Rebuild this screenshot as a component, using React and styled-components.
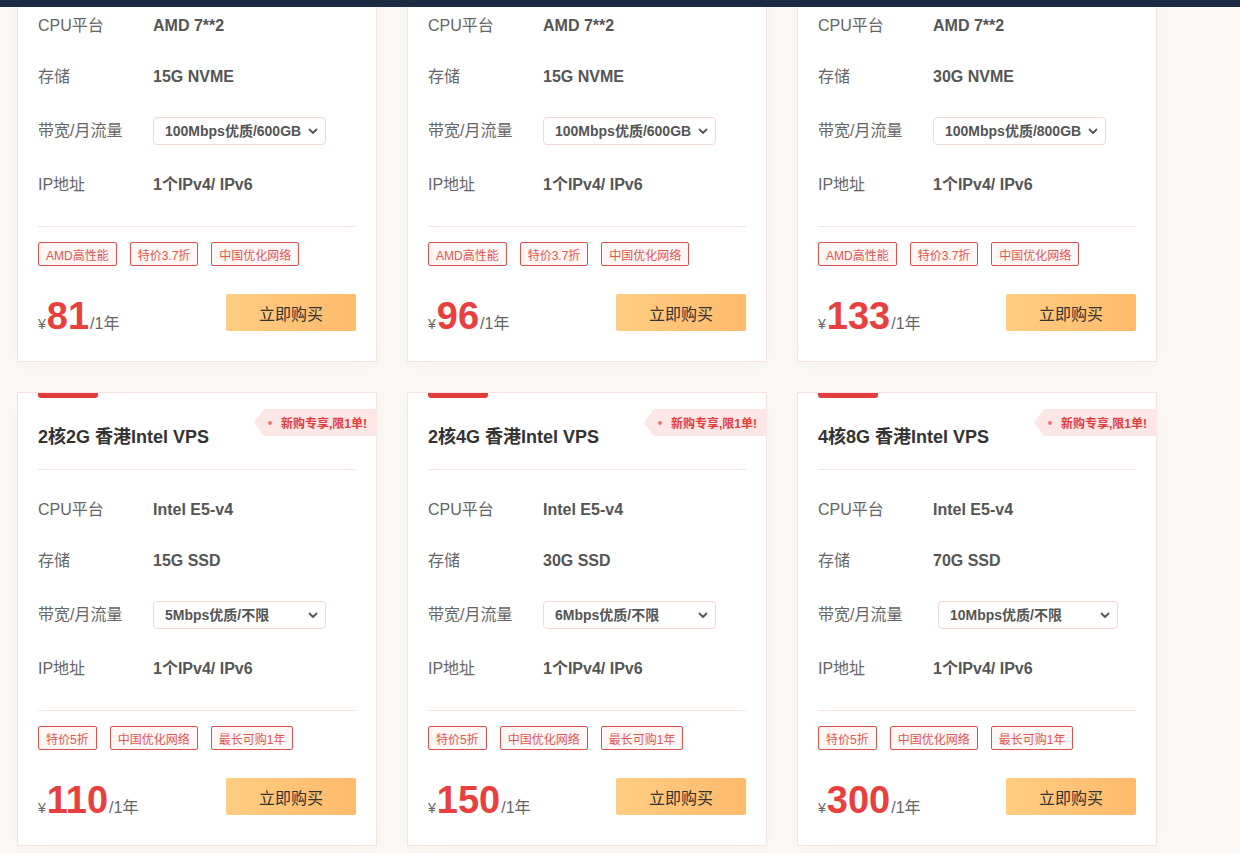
import React from "react";
import styled, { createGlobalStyle } from "styled-components";

const Global = createGlobalStyle`
  html, body { margin: 0; padding: 0; background: #fbf9f6; }
  body { font-family: "Liberation Sans", "Noto Sans CJK SC", sans-serif; overflow: hidden; }
  * { box-sizing: border-box; }
`;

const Page = styled.div`
  width: 1240px;
  height: 853px;
  overflow: hidden;
  display: flex;
  flex-direction: column;
  background: #fbf9f6;
`;

const TopBar = styled.div`
  height: 7px;
  flex: none;
  background: #1d2a42;
  position: relative;
  z-index: 2;
`;

const Main = styled.main`
  flex: 1;
  overflow: hidden;
  padding: 0 0 0 17px;
`;

const Grid = styled.div`
  margin-top: -99px;
  display: grid;
  grid-template-columns: repeat(3, 360px);
  column-gap: 30px;
  row-gap: 30px;
`;

const Card = styled.div`
  position: relative;
  background: #fff;
  border: 1px solid #f6e3df;
  box-shadow: 0 6px 24px rgba(120, 80, 40, 0.04);
  padding: 0 20px 30px;
  display: flex;
  flex-direction: column;
`;

const Accent = styled.div`
  width: 60px;
  height: 5px;
  background: #e23d3d;
  border-radius: 0 0 3px 3px;
`;

const Badge = styled.div`
  position: absolute;
  top: 16px;
  right: -1px;
  height: 27px;
  width: 123px;
  display: flex;
  align-items: center;
  padding-left: 27px;
  background: #fde6e6;
  clip-path: polygon(10px 0, 100% 0, 100% 100%, 10px 100%, 0 50%);
  color: #e03e3a;
  font-size: 12px;
  font-weight: bold;
  white-space: nowrap;
  &::before {
    content: "";
    position: absolute;
    left: 14px;
    top: 12px;
    width: 4px;
    height: 4px;
    border-radius: 50%;
    background: #ea7a76;
  }
`;

const Head = styled.div`
  padding: 27px 0 20px;
  border-bottom: 1px solid #f3e4e0;
`;

const Title = styled.h3`
  margin: 0;
  font-size: 18px;
  line-height: 24px;
  font-weight: bold;
  color: #333;
`;

const Specs = styled.div`
  display: flex;
  flex-direction: column;
  gap: 29px;
  padding: 29px 0 30px;
  border-bottom: 1px solid #f3e4e0;
`;

const Row = styled.div`
  display: flex;
  align-items: center;
  min-height: 22px;
`;

const Label = styled.div`
  width: 115px;
  flex: none;
  font-size: 16px;
  line-height: 22px;
  color: #666;
`;

const Value = styled.div`
  font-size: 16px;
  line-height: 22px;
  font-weight: bold;
  color: #555;
`;

const SelectWrap = styled.div`
  position: relative;
  width: ${(p) => p.$w}px;
  margin-left: ${(p) => p.$offset || 0}px;
`;

const Select = styled.select`
  appearance: none;
  -webkit-appearance: none;
  width: 100%;
  height: 28px;
  border: 1px solid #f2d9d5;
  border-radius: 4px;
  background: #fff;
  padding: 0 11px;
  font-family: inherit;
  font-size: 14px;
  font-weight: bold;
  color: #555;
  outline: none;
`;

const Chevron = styled.svg`
  position: absolute;
  right: 8px;
  top: 11px;
  pointer-events: none;
`;

const Tags = styled.div`
  display: flex;
  gap: 13px;
  padding-top: 15px;
`;

const Tag = styled.span`
  height: 24px;
  display: inline-flex;
  align-items: center;
  padding: 0 7px;
  border: 1px solid #d9514c;
  border-radius: 2px;
  background: #fff6f6;
  color: #df5650;
  font-size: 12px;
  white-space: nowrap;
`;

const Bottom = styled.div`
  margin-top: 28px;
  display: flex;
  align-items: flex-end;
  justify-content: space-between;
`;

const Price = styled.div`
  display: flex;
  align-items: baseline;
  color: #666;
  margin-bottom: -5px;
`;

const Yen = styled.span`
  font-size: 14px;
  color: #666;
  margin-right: 1px;
`;

const Amount = styled.span`
  font-size: 38px;
  line-height: 40px;
  font-weight: bold;
  color: #e8403e;
`;

const Unit = styled.span`
  font-size: 16px;
  color: #666;
  margin-left: 1px;
`;

const BuyButton = styled.button`
  width: 130px;
  height: 37px;
  border: none;
  border-radius: 2px;
  background: linear-gradient(90deg, #ffcd82 0%, #ffba6b 100%);
  color: #333;
  font-family: inherit;
  font-size: 16px;
  cursor: pointer;
`;

const amdTags = ["AMD高性能", "特价3.7折", "中国优化网络"];
const intelTags = ["特价5折", "中国优化网络", "最长可购1年"];

const plans = [
  { title: "1核1G 香港AMD VPS", cpu: "AMD 7**2", disk: "15G NVME", bw: "100Mbps优质/600GB", tags: amdTags, price: 81, w: 173 },
  { title: "1核2G 香港AMD VPS", cpu: "AMD 7**2", disk: "15G NVME", bw: "100Mbps优质/600GB", tags: amdTags, price: 96, w: 173 },
  { title: "2核4G 香港AMD VPS", cpu: "AMD 7**2", disk: "30G NVME", bw: "100Mbps优质/800GB", tags: amdTags, price: 133, w: 173 },
  { title: "2核2G 香港Intel VPS", cpu: "Intel E5-v4", disk: "15G SSD", bw: "5Mbps优质/不限", tags: intelTags, price: 110, w: 173 },
  { title: "2核4G 香港Intel VPS", cpu: "Intel E5-v4", disk: "30G SSD", bw: "6Mbps优质/不限", tags: intelTags, price: 150, w: 173 },
  { title: "4核8G 香港Intel VPS", cpu: "Intel E5-v4", disk: "70G SSD", bw: "10Mbps优质/不限", tags: intelTags, price: 300, w: 180, offset: 5 },
];

function PlanCard({ plan }) {
  return (
    <Card>
      <Accent />
      <Badge>新购专享,限1单!</Badge>
      <Head>
        <Title>{plan.title}</Title>
      </Head>
      <Specs>
        <Row>
          <Label>CPU平台</Label>
          <Value>{plan.cpu}</Value>
        </Row>
        <Row>
          <Label>存储</Label>
          <Value>{plan.disk}</Value>
        </Row>
        <Row>
          <Label>带宽/月流量</Label>
          <SelectWrap $w={plan.w} $offset={plan.offset}>
            <Select defaultValue={plan.bw}>
              <option value={plan.bw}>{plan.bw}</option>
            </Select>
            <Chevron width="10" height="7" viewBox="0 0 10 7">
              <path d="M1.5 1.5 L5 5 L8.5 1.5" fill="none" stroke="#555" strokeWidth="1.8" strokeLinecap="round" strokeLinejoin="round" />
            </Chevron>
          </SelectWrap>
        </Row>
        <Row>
          <Label>IP地址</Label>
          <Value>1个IPv4/ IPv6</Value>
        </Row>
      </Specs>
      <Tags>
        {plan.tags.map((t) => (
          <Tag key={t}>{t}</Tag>
        ))}
      </Tags>
      <Bottom>
        <Price>
          <Yen>¥</Yen>
          <Amount>{plan.price}</Amount>
          <Unit>/1年</Unit>
        </Price>
        <BuyButton>立即购买</BuyButton>
      </Bottom>
    </Card>
  );
}

export default function App() {
  return (
    <>
      <Global />
      <Page>
        <TopBar />
        <Main>
          <Grid>
            {plans.map((p) => (
              <PlanCard key={p.title} plan={p} />
            ))}
          </Grid>
        </Main>
      </Page>
    </>
  );
}
